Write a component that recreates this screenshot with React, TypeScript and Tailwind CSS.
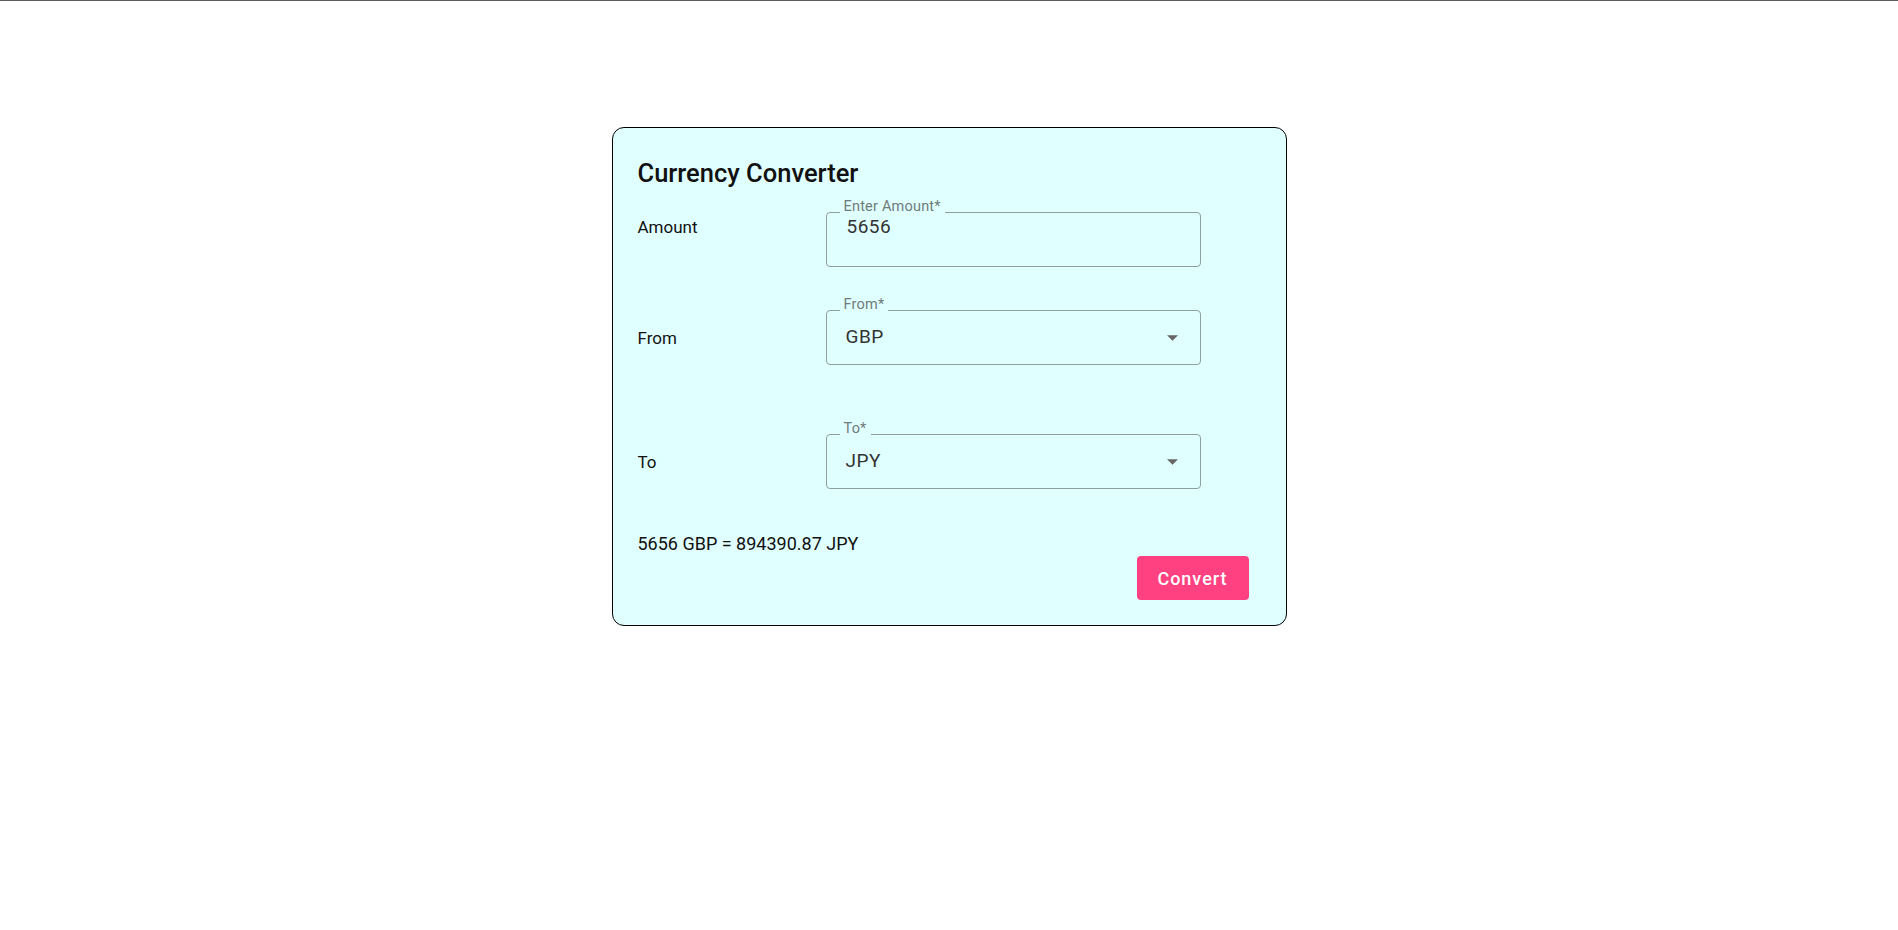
import { useState } from "react";

// --- Umrandetes Feld mit Label in der Kerbe ---
const Field = ({
  label,
  value,
  select = false,
}: {
  label: string;
  value: string;
  select?: boolean;
}) => (
  <div className="relative h-[55px] w-[375px] rounded-[4px] border border-[#8f9f9f]">
    <span className="absolute -top-[15px] left-[13px] bg-[#e0ffff] px-[4px] text-[14.5px] leading-[18px] tracking-[0.2px] text-[#6f7b7b]">
      {label}
    </span>
    {select ? (
      <div className="flex h-full items-center justify-between pl-[19px] pr-[22px]">
        <span className="text-[19px] tracking-[0.5px] text-[#333]">{value}</span>
        <svg width="11" height="6" viewBox="0 0 10 5">
          <path d="M0 0 L10 0 L5 5 Z" fill="#666" />
        </svg>
      </div>
    ) : (
      <div className="pl-[20px] pt-[2px] text-[19px] leading-[24px] tracking-[0.5px] text-[#333]">{value}</div>
    )}
  </div>
);

export default function App() {
  const [amount] = useState("5656");
  const from = "GBP";
  const to = "JPY";
  const result = 894390.87;

  return (
    <div className="min-h-screen border-t border-[#5c5c5c] bg-white font-['Roboto',sans-serif]">
      <div className="mx-auto mt-[126px] w-[675px] rounded-xl border border-black bg-[#e0ffff] px-[25px] pb-[25px] pt-[29px] text-[#111]">
        <h2 className="text-[25.5px] font-medium leading-[32px]">Currency Converter</h2>

        {/* Betrag */}
        <div className="mt-[23px] flex items-start">
          <label className="mt-[3px] w-[188px] text-[17px] leading-[24px]">Amount</label>
          <Field label="Enter Amount*" value={amount} />
        </div>

        {/* Von */}
        <div className="mt-[43px] flex items-center">
          <label className="w-[188px] text-[17px] leading-[24px]">From</label>
          <Field label="From*" value={from} select />
        </div>

        {/* Nach */}
        <div className="mt-[69px] flex items-center">
          <label className="w-[188px] text-[17px] leading-[24px]">To</label>
          <Field label="To*" value={to} select />
        </div>

        <p className="mt-[43px] text-[18px] leading-[24px]">
          {amount} {from} = {result.toFixed(2)} {to}
        </p>

        <div className="flex justify-end pr-[12px]">
          <button className="h-[44px] w-[112px] rounded-[4px] bg-[#ff4081] text-[18px] font-medium tracking-[1px] text-white">
            Convert
          </button>
        </div>
      </div>
    </div>
  );
}
